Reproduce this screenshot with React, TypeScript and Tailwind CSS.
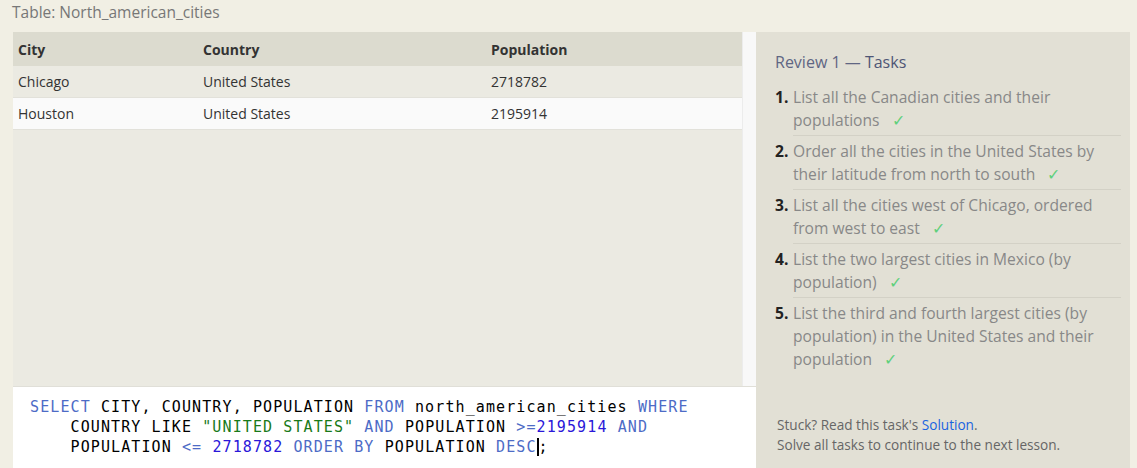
import React from "react";

const rows = [
  { city: "Chicago", country: "United States", population: "2718782" },
  { city: "Houston", country: "United States", population: "2195914" },
];

const tasks = [
  "List all the Canadian cities and their populations",
  "Order all the cities in the United States by their latitude from north to south",
  "List all the cities west of Chicago, ordered from west to east",
  "List the two largest cities in Mexico (by population)",
  "List the third and fourth largest cities (by population) in the United States and their population",
];

const kw = "text-[#4d6bc6]";
const num = "text-[#2a17d9]";

const App = () => {
  return (
    <div className="h-[468px] overflow-hidden bg-[#f1efe4] font-['Open_Sans',sans-serif] text-[#333]">
      <div className="px-3 h-[32px] pt-[2px] text-[15.5px] leading-[20px] text-[#777]">Table: North_american_cities</div>
      <div className="flex pl-[13px] pr-[7px] h-[436px]">
        {/* left: results + editor */}
        <div className="w-[743px] flex flex-col">
          <div className="flex h-[355px] border-b border-[#e0dfd8]">
            <div className="flex-1 bg-[#ebeae2]">
              <div className="flex h-[34px] items-center bg-[#dcdbcf] font-bold text-[14px]">
                <div className="w-[185px] pl-[5px]">City</div>
                <div className="w-[288px] pl-[5px]">Country</div>
                <div className="flex-1 pl-[5px]">Population</div>
              </div>
              {rows.map((r, idx) => (
                <div
                  key={idx}
                  className={`flex h-[32px] items-center text-[14px] border-b border-[#e2e1da] ${idx % 2 === 0 ? "bg-[#ebeae2]" : "bg-[#fafafa]"}`}
                >
                  <div className="w-[185px] pl-[5px]">{r.city}</div>
                  <div className="w-[288px] pl-[5px]">{r.country}</div>
                  <div className="flex-1 pl-[5px]">{r.population}</div>
                </div>
              ))}
            </div>
            <div className="w-[14px] bg-[#f8f8f8] border-l border-[#ececec]" />
          </div>
          <div className="flex-1 bg-white pl-[17px] pt-[10px] font-['DejaVu_Sans_Mono',monospace] text-[15px] leading-[20px] tracking-[1.1px] text-black whitespace-pre">
            <div>
              <span className={kw}>SELECT</span> CITY, COUNTRY, POPULATION <span className={kw}>FROM</span> north_american_cities <span className={kw}>WHERE</span>
            </div>
            <div>
              {"    "}COUNTRY LIKE <span className="text-[#197a19]">"UNITED STATES"</span> <span className={kw}>AND</span> POPULATION <span className={kw}>&gt;=</span><span className={num}>2195914</span> <span className={kw}>AND</span>
            </div>
            <div>
              {"    "}POPULATION <span className={kw}>&lt;=</span> <span className={num}>2718782</span> <span className={kw}>ORDER BY</span> POPULATION <span className={kw}>DESC</span><span className="border-l-2 border-black">;</span>
            </div>
          </div>
        </div>
        {/* right: tasks */}
        <div className="w-[374px] bg-[#e2e0d5] pl-[19px] pr-[9px] pt-[19px] flex flex-col">
          <div className="text-[16px] leading-[22px] text-[#5f6683]">
            Review 1 — <span className="text-[#4f5675]">Tasks</span>
          </div>
          <ol className="mt-[13px]">
            {tasks.map((t, idx) => (
              <li key={idx} className={`flex text-[15.6px] leading-[23px] ${idx === 0 ? "" : "pt-[4px]"}`}>
                <span className="w-[18px] shrink-0 font-bold text-[#222]">{idx + 1}.</span>
                <span className={`flex-1 text-[#888] pb-[3px] ${idx < tasks.length - 1 ? "border-b border-[#d3d1c6]" : ""}`}>
                  {t} <span className="ml-[8px] text-[#5fd07c]">✓</span>
                </span>
              </li>
            ))}
          </ol>
          <div className="mt-auto mb-[13px] text-[13.6px] leading-[20px] text-[#666] pl-[2px]">
            <div>
              Stuck? Read this task's <span className="text-[#1a63e0]">Solution</span>.
            </div>
            <div>Solve all tasks to continue to the next lesson.</div>
          </div>
        </div>
      </div>
    </div>
  );
};

export default App;
